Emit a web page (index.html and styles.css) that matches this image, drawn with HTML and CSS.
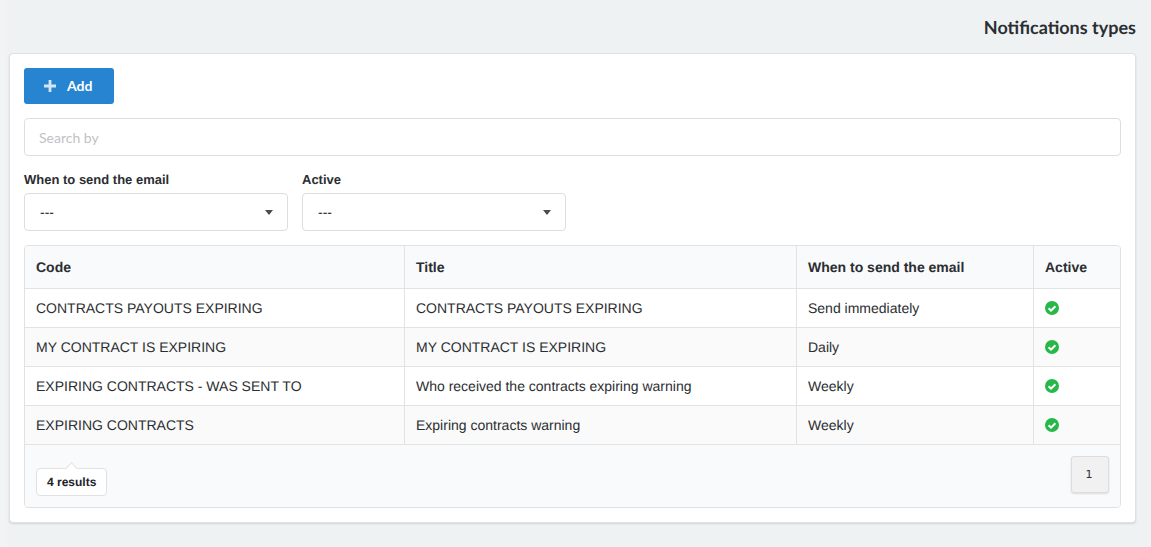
FILE: index.html
```html
<!DOCTYPE html>
<html lang="en">

<head>
	<meta charset="UTF-8">
	<title>Notifications types</title>
	<link rel="stylesheet" href="styles.css">
</head>

<body>
	<div id="wrapper">
		<h1 class="page-title">Notifications types</h1>
		<div class="card">
			<button class="add-btn" type="button">
				<svg class="add-icon" viewBox="0 0 12 12" width="12" height="12"><path d="M4.6 0h2.8v4.6H12v2.8H7.4V12H4.6V7.4H0V4.6h4.6z"/></svg>
				<span class="add-text">Add</span>
			</button>
			<input class="search" type="text" placeholder="Search by">
			<div class="filters">
				<div class="filter">
					<label class="filter-label">When to send the email</label>
					<div class="select"><span>---</span><i class="caret"></i></div>
				</div>
				<div class="filter">
					<label class="filter-label">Active</label>
					<div class="select"><span>---</span><i class="caret"></i></div>
				</div>
			</div>
			<div class="table-box">
				<table class="grid">
					<colgroup>
						<col class="col-code">
						<col class="col-title">
						<col class="col-when">
						<col>
					</colgroup>
					<thead>
						<tr>
							<th>Code</th>
							<th>Title</th>
							<th>When to send the email</th>
							<th>Active</th>
						</tr>
					</thead>
					<tbody>
						<tr>
							<td>CONTRACTS PAYOUTS EXPIRING</td>
							<td>CONTRACTS PAYOUTS EXPIRING</td>
							<td>Send immediately</td>
							<td><svg class="check" viewBox="0 0 14 14" width="14" height="14"><circle cx="7" cy="7" r="7"/><path d="M3.6 7.2l2.4 2.4 4.4-4.4"/></svg></td>
						</tr>
						<tr>
							<td>MY CONTRACT IS EXPIRING</td>
							<td>MY CONTRACT IS EXPIRING</td>
							<td>Daily</td>
							<td><svg class="check" viewBox="0 0 14 14" width="14" height="14"><circle cx="7" cy="7" r="7"/><path d="M3.6 7.2l2.4 2.4 4.4-4.4"/></svg></td>
						</tr>
						<tr>
							<td>EXPIRING CONTRACTS - WAS SENT TO</td>
							<td>Who received the contracts expiring warning</td>
							<td>Weekly</td>
							<td><svg class="check" viewBox="0 0 14 14" width="14" height="14"><circle cx="7" cy="7" r="7"/><path d="M3.6 7.2l2.4 2.4 4.4-4.4"/></svg></td>
						</tr>
						<tr>
							<td>EXPIRING CONTRACTS</td>
							<td>Expiring contracts warning</td>
							<td>Weekly</td>
							<td><svg class="check" viewBox="0 0 14 14" width="14" height="14"><circle cx="7" cy="7" r="7"/><path d="M3.6 7.2l2.4 2.4 4.4-4.4"/></svg></td>
						</tr>
					</tbody>
				</table>
				<div class="table-foot">
					<div class="results">4 results</div>
					<button class="page-btn" type="button">1</button>
				</div>
			</div>
		</div>
	</div>
</body>

</html>
```

FILE: styles.css
```css
body {
	margin: 0;
	background-color: #eff2f3;
	background-image: linear-gradient(to right, #f3f5f5, #eff2f3 9px);
	font-family: "Liberation Sans", sans-serif;
	font-size: 14px;
	color: #212529;
	text-rendering: geometricPrecision;
}

#wrapper {
	padding: 15px 15px 24px 9px;
}

.page-title {
	margin: 0 0 14px;
	font-family: Lato, sans-serif;
	font-size: 18px;
	line-height: 24px;
	font-weight: 700;
	text-align: right;
	color: #2a2e32;
}

.card {
	background-color: #fff;
	border: 1px solid #dfe1e3;
	border-radius: 4px;
	box-shadow: 0 1px 2px rgba(0, 0, 0, 0.12);
	padding: 14px;
}

.add-btn {
	display: flex;
	align-items: center;
	gap: 11px;
	width: 90px;
	height: 36px;
	padding: 0 0 0 20px;
	background-color: #2684d0;
	border: 0;
	border-radius: 3px;
	color: #fff;
	font-family: Lato, sans-serif;
	font-size: 14px;
	font-weight: 700;
}

.add-text {
	padding-bottom: 2px;
}

.add-icon {
	fill: #d4e6f5;
}

.search {
	display: block;
	box-sizing: border-box;
	width: 100%;
	height: 38px;
	margin: 14px 0;
	padding: 0 14px;
	border: 1px solid #dcdee0;
	border-radius: 4px;
	font-family: Lato, sans-serif;
	font-size: 14px;
}

.search::placeholder {
	color: #bfc2c5;
	opacity: 1;
}

.filters {
	display: flex;
	gap: 14px;
}

.filter {
	width: 264px;
}

.filter-label {
	display: block;
	margin-bottom: 5px;
	padding-top: 1px;
	font-size: 13px;
	line-height: 17px;
	font-weight: 700;
	color: #2b2e31;
}

.select {
	display: flex;
	align-items: center;
	justify-content: space-between;
	box-sizing: border-box;
	height: 38px;
	padding: 0 14px 0 15px;
	border: 1px solid #dcdee0;
	border-radius: 4px;
	font-size: 14px;
}

.caret {
	border-top: 5px solid #4a4d50;
	border-left: 4px solid transparent;
	border-right: 4px solid transparent;
}

.table-box {
	margin-top: 14px;
	border: 1px solid #dfe1e3;
	border-radius: 4px;
	overflow: hidden;
}

.grid {
	width: 100%;
	table-layout: fixed;
	border-collapse: collapse;
}

.col-code {
	width: 379px;
}

.col-title {
	width: 392px;
}

.col-when {
	width: 237px;
}

.grid th,
.grid td {
	padding: 0 11px 0 11.5px;
	border-left: 1px solid #e1e3e5;
	border-bottom: 1px solid #e1e3e5;
	text-align: left;
	color: #2b2e31;
}

.grid th:first-child,
.grid td:first-child {
	padding-left: 11px;
	border-left: 0;
}

.grid th {
	height: 42px;
	background-color: #f9fafc;
	font-weight: 700;
}

.grid td {
	height: 38px;
	line-height: 16px;
}

.grid tbody tr:nth-child(even) td {
	background-color: #fafafa;
}

.check {
	display: block;
}

.check circle {
	fill: #28b84a;
}

.check path {
	fill: none;
	stroke: #fff;
	stroke-width: 2;
}

.table-foot {
	display: flex;
	justify-content: space-between;
	height: 62px;
	box-sizing: border-box;
	padding: 11px 11px 0;
	background-color: #f9fafc;
}

.results {
	position: relative;
	align-self: flex-start;
	box-sizing: border-box;
	height: 28px;
	margin-top: 12px;
	padding: 0 10px;
	background-color: #fff;
	border: 1px solid #dfe1e3;
	border-radius: 4px;
	font-size: 12px;
	line-height: 26px;
	font-weight: 700;
}

/* small pointer on top of the results badge */
.results::before {
	content: "";
	position: absolute;
	top: -5px;
	left: 30px;
	width: 8px;
	height: 8px;
	background-color: #fff;
	border-top: 1px solid #dfe1e3;
	border-left: 1px solid #dfe1e3;
	transform: rotate(45deg);
}

.page-btn {
	width: 38px;
	height: 37px;
	padding: 0 2px 0 0;
	background-color: #f1f1f1;
	border: 1px solid #dddddd;
	border-radius: 3px;
	box-shadow: 0 1px 2px rgba(0, 0, 0, 0.12);
	font-family: "DejaVu Sans", sans-serif;
	font-size: 11px;
	color: #2b2e31;
}
```
